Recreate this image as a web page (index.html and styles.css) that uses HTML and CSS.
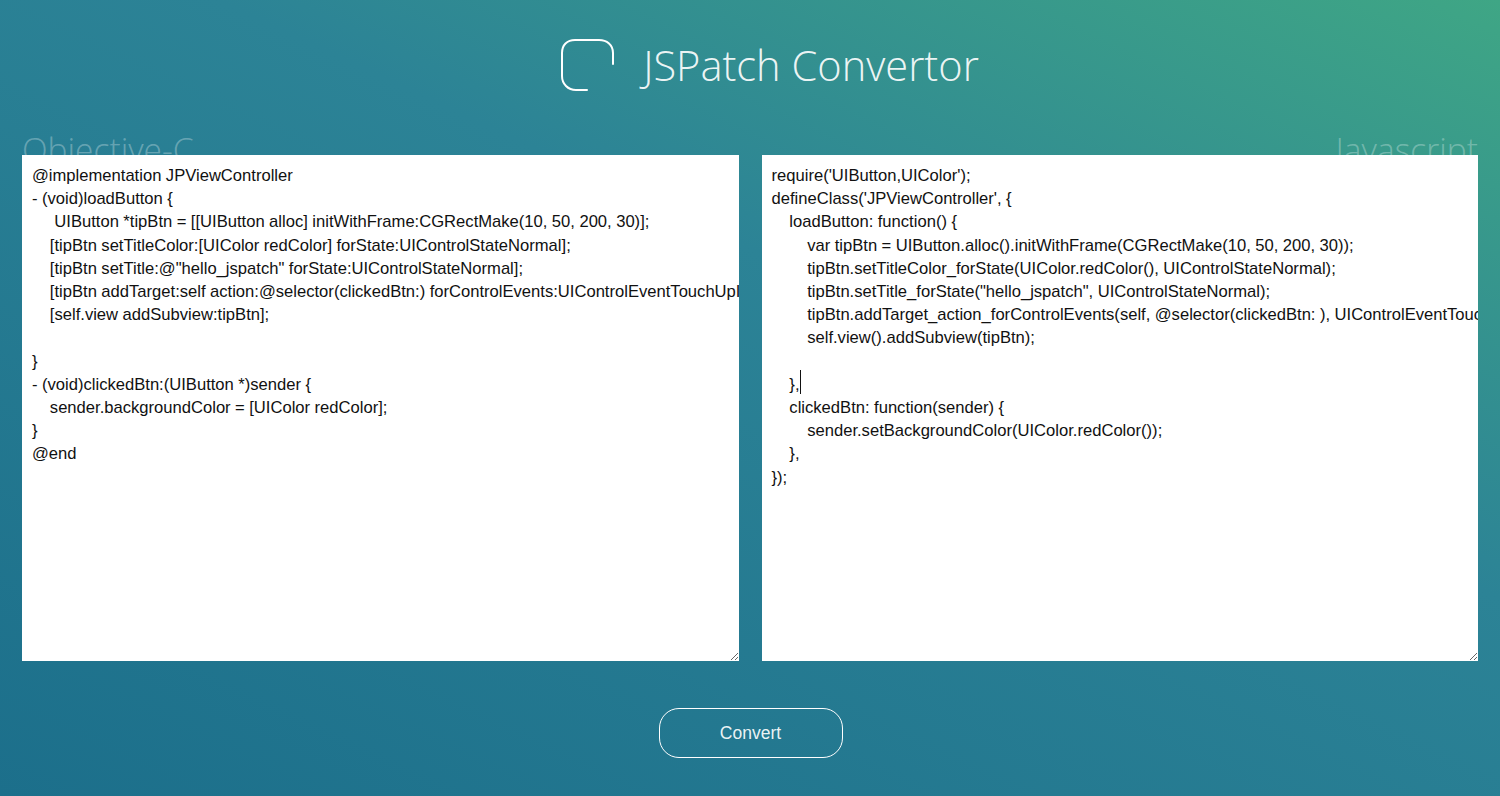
FILE: index.html
```html
<!DOCTYPE html>
<html lang="en">
<head>
<meta charset="utf-8">
<title>JSPatch Convertor</title>
<link rel="stylesheet" href="styles.css">
</head>
<body>
<header class="brand">
  <svg class="logo" width="54" height="54" viewBox="0 0 54 54" fill="none" stroke="#fff" stroke-width="2" stroke-linecap="round">
    <path d="M27 52H16C8 52 2 46 2 38V15C2 7 7 2 15 2H39C47 2 53 7 53 15V26"/>
  </svg>
  <h1 class="title">JSPatch Convertor</h1>
</header>
<main class="editors">
  <section class="pane">
    <h2 class="label">Objective-C</h2>
    <textarea class="code" wrap="off" spellcheck="false">@implementation JPViewController
- (void)loadButton {
     UIButton *tipBtn = [[UIButton alloc] initWithFrame:CGRectMake(10, 50, 200, 30)];
    [tipBtn setTitleColor:[UIColor redColor] forState:UIControlStateNormal];
    [tipBtn setTitle:@"hello_jspatch" forState:UIControlStateNormal];
    [tipBtn addTarget:self action:@selector(clickedBtn:) forControlEvents:UIControlEventTouchUpInside];
    [self.view addSubview:tipBtn];

}
- (void)clickedBtn:(UIButton *)sender {
    sender.backgroundColor = [UIColor redColor];
}
@end</textarea>
  </section>
  <section class="pane">
    <h2 class="label label-right">Javascript</h2>
    <textarea class="code" wrap="off" spellcheck="false">require('UIButton,UIColor');
defineClass('JPViewController', {
    loadButton: function() {
        var tipBtn = UIButton.alloc().initWithFrame(CGRectMake(10, 50, 200, 30));
        tipBtn.setTitleColor_forState(UIColor.redColor(), UIControlStateNormal);
        tipBtn.setTitle_forState("hello_jspatch", UIControlStateNormal);
        tipBtn.addTarget_action_forControlEvents(self, @selector(clickedBtn: ), UIControlEventTouchUpInside);
        self.view().addSubview(tipBtn);

    },
    clickedBtn: function(sender) {
        sender.setBackgroundColor(UIColor.redColor());
    },
});</textarea>
    <span class="caret"></span>
  </section>
</main>
<div class="actions">
  <button class="convert" type="button">Convert</button>
</div>
</body>
</html>
```
FILE: styles.css
```css
* { box-sizing: border-box; }
html, body { height: 100%; }
body {
  margin: 0;
  height: 796px;
  overflow: hidden;
  background: linear-gradient(25deg, #1c6f8b 0%, #2c8396 60%, #3fa685 100%);
  font-family: "Liberation Sans", Arial, sans-serif;
  color: #fff;
}
.brand {
  display: flex;
  align-items: center;
  justify-content: center;
  gap: 29px;
  height: 129px;
  padding: 0 0 0 39px;
}
.logo { display: block; flex: none; }
.title {
  margin: 2px 0 0;
  font-family: "Open Sans", sans-serif;
  font-weight: 300;
  font-size: 41.6px;
  line-height: 1;
  color: rgba(255, 255, 255, 0.92);
}
.editors {
  display: flex;
  gap: 23px;
  padding: 0 22px;
}
.pane {
  position: relative;
  flex: 1;
  height: 532px;
  padding-top: 26px;
  display: flex;
  flex-direction: column;
}
.label {
  position: absolute;
  top: -3px;
  left: 0;
  right: 0;
  margin: 0;
  font-family: "Open Sans", sans-serif;
  font-weight: 300;
  font-size: 33.5px;
  line-height: 46px;
  color: rgba(255, 255, 255, 0.3);
}
.label-right { text-align: right; }
.code {
  position: relative;
  display: block;
  width: 100%;
  height: 506px;
  margin: 0;
  padding: 9px 10px;
  border: 0;
  border-radius: 0;
  outline: 0;
  background: #fff;
  color: #111;
  font-family: "Liberation Sans", Arial, sans-serif;
  font-size: 16.6px;
  word-spacing: -0.15px;
  line-height: 23.2px;
  white-space: pre;
  overflow: hidden;
  resize: both;
}
.caret {
  position: absolute;
  left: 38px;
  top: 241px;
  width: 1px;
  height: 24px;
  background: #111;
}
.actions {
  display: flex;
  justify-content: center;
  padding: 47px 0 0 1px;
}
.convert {
  width: 184px;
  height: 50px;
  border: 1.5px solid #fff;
  border-radius: 20px;
  background: transparent;
  color: rgba(255, 255, 255, 0.92);
  font-family: "Liberation Sans", Arial, sans-serif;
  font-size: 17.5px;
}
```
